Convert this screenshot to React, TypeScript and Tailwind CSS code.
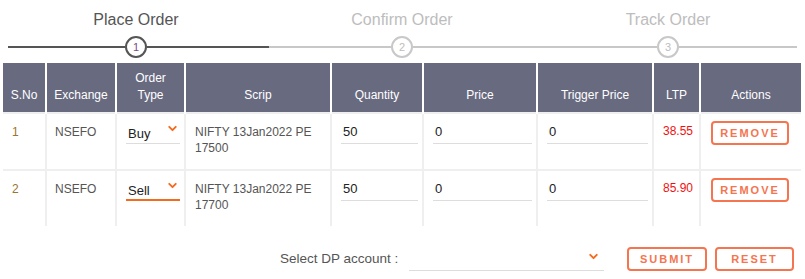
import { ChevronDown } from "lucide-react";

const steps = [
  { n: 1, label: "Place Order", active: true },
  { n: 2, label: "Confirm Order", active: false },
  { n: 3, label: "Track Order", active: false },
];

const rows = [
  { sno: 1, exch: "NSEFO", type: "Buy", scrip: ["NIFTY 13Jan2022 PE", "17500"], qty: "50", price: "0", trigger: "0", ltp: "38.55", focused: false },
  { sno: 2, exch: "NSEFO", type: "Sell", scrip: ["NIFTY 13Jan2022 PE", "17700"], qty: "50", price: "0", trigger: "0", ltp: "85.90", focused: true },
];

function Stepper() {
  return (
    <div className="flex pl-[3px] pr-[4px] pt-[10px]">
      {steps.map((s, i) => {
        const line = s.active ? "bg-[#555555]" : "bg-[#c8c8c8]";
        return (
          <div key={s.n} className="flex-1 flex flex-col items-center">
            <div className={`text-[16px] leading-[20px] ${s.active ? "text-[#555555]" : "text-[#bdbdbd]"}`}>{s.label}</div>
            <div className="w-full flex items-center mt-[6px]">
              <div className="flex-1">
                <div className={`h-[2px] ${line} ${i === 0 ? "ml-[5px]" : ""}`} />
              </div>
              <div
                className={`w-[22px] h-[22px] rounded-full border-2 bg-white flex items-center justify-center text-[11px] ${
                  s.active ? "border-[#555555] text-[#7a4a8a]" : "border-[#c8c8c8] text-[#bdbdbd]"
                }`}
              >
                {s.n}
              </div>
              <div className="flex-1">
                <div className={`h-[2px] ${line} ${i === 2 ? "mr-[4px]" : ""}`} />
              </div>
            </div>
          </div>
        );
      })}
    </div>
  );
}

function UnderlineInput({ value }: { value: string }) {
  return (
    <div className="border-b border-[#dddddd] h-[24px] flex items-end pb-[3px] text-[13px] text-[#222222] pl-[2px]">{value}</div>
  );
}

function OutlineButton({ label, w }: { label: string; w: string }) {
  return (
    <button className={`${w} h-[24px] rounded-[4px] border-2 border-[#f4754f] text-[#f4754f] text-[11px] font-bold tracking-[2px] flex items-center justify-center bg-white`}>
      {label}
    </button>
  );
}

export default function App() {
  const th = "bg-[#686a80] text-white font-normal text-[12px] leading-[17px] align-bottom pb-[8px] border-x-2 border-white";
  const td = "align-top border-2 border-[#efefef] text-[12px] leading-[16px]";
  return (
    <div className="w-[805px] h-[279px] bg-white font-['Liberation_Sans',Arial,sans-serif] text-[#555555]">
      <Stepper />
      <div className="px-[3px] mt-[5px]">
        <table className="w-[798px] table-fixed border-collapse">
          <colgroup>
            <col className="w-[43px]" />
            <col className="w-[70px]" />
            <col className="w-[69px]" />
            <col className="w-[146px]" />
            <col className="w-[92px]" />
            <col className="w-[114px]" />
            <col className="w-[116px]" />
            <col className="w-[47px]" />
            <col className="w-[101px]" />
          </colgroup>
          <thead>
            <tr className="h-[50px] border-b-2 border-white">
              <th className={`${th} border-l-0`}>S.No</th>
              <th className={th}>Exchange</th>
              <th className={th}>
                Order
                <br />
                Type
              </th>
              <th className={th}>Scrip</th>
              <th className={th}>Quantity</th>
              <th className={th}>Price</th>
              <th className={th}>Trigger Price</th>
              <th className={th}>LTP</th>
              <th className={`${th} border-r-0`}>Actions</th>
            </tr>
          </thead>
          <tbody>
            {rows.map((r, idx) => {
              const last = idx === 1 ? "border-b-0" : "";
              return (
                <tr key={r.sno} className={idx === 0 ? "h-[57px]" : "h-[56px]"}>
                  <td className={`${td} border-l-0 pl-[9px] pt-[10px] text-[#9a7432] ${last}`}>{r.sno}</td>
                  <td className={`${td} pl-[8px] pt-[10px] ${last}`}>{r.exch}</td>
                  <td className={`${td} pl-[9px] pr-[4px] pt-[6px] ${last}`}>
                    <div
                      className={`flex justify-between h-[24px] text-[13px] text-[#222222] ${
                        r.focused ? "border-b-2 border-[#f46b1e]" : "border-b border-[#dddddd]"
                      }`}
                    >
                      <span className="pt-[6px] pl-[2px]">{r.type}</span>
                      <ChevronDown size={13} strokeWidth={3.5} className="text-[#f46b1e] mt-[2px] mr-[1px]" />
                    </div>
                  </td>
                  <td className={`${td} pl-[9px] pt-[10px] ${last}`}>
                    {r.scrip[0]}
                    <br />
                    {r.scrip[1]}
                  </td>
                  <td className={`${td} pl-[9px] pr-[4px] pt-[6px] ${last}`}>
                    <UnderlineInput value={r.qty} />
                  </td>
                  <td className={`${td} pl-[9px] pr-[4px] pt-[6px] ${last}`}>
                    <UnderlineInput value={r.price} />
                  </td>
                  <td className={`${td} pl-[9px] pr-[4px] pt-[6px] ${last}`}>
                    <UnderlineInput value={r.trigger} />
                  </td>
                  <td className={`${td} pl-[9px] pt-[9px] text-[12.5px] text-[#f01010] ${last}`}>{r.ltp}</td>
                  <td className={`${td} border-r-0 pl-[10px] pt-[7px] ${last}`}>
                    <OutlineButton label="REMOVE" w="w-[78px]" />
                  </td>
                </tr>
              );
            })}
          </tbody>
        </table>
      </div>
      <div className="flex items-center mt-[21px]">
        <div className="ml-[280px] w-[120px] text-[13.5px] text-[#555555] whitespace-nowrap">Select DP account :</div>
        <div className="ml-[9px] w-[195px] h-[24px] border-b border-[#dddddd] flex justify-end">
          <ChevronDown size={13} strokeWidth={3.5} className="text-[#f46b1e] mt-[3px] mr-[4px]" />
        </div>
        <div className="ml-[23px]">
          <OutlineButton label="SUBMIT" w="w-[80px]" />
        </div>
        <div className="ml-[8px]">
          <OutlineButton label="RESET" w="w-[79px]" />
        </div>
      </div>
    </div>
  );
}
